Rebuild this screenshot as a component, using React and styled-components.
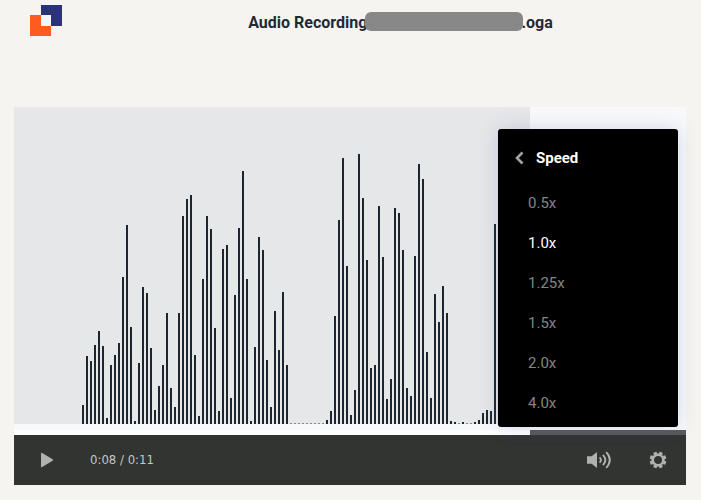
import React, { useState } from "react";
import styled, { createGlobalStyle } from "styled-components";

const GlobalStyle = createGlobalStyle`
  *, *::before, *::after { box-sizing: border-box; }
  body {
    margin: 0;
    background: #f5f4f0;
    color: #1f2a37;
    font-family: Roboto, "Liberation Sans", sans-serif;
  }
`;

const Page = styled.div`
  padding: 0 15px 15px 14px;
`;

const Header = styled.header`
  display: grid;
  grid-template-columns: 86px 1fr;
  height: 107px;
  margin-right: -15px;
`;

const HomeLink = styled.a`
  display: block;
  padding: 5px 0 0 16px;
  svg { display: block; }
`;

const Title = styled.h1`
  display: flex;
  justify-content: center;
  align-items: flex-start;
  height: 20px;
  margin: 12px 0 0;
  font-size: 16px;
  line-height: 22px;
  font-weight: 700;
  white-space: pre;
`;

const Redaction = styled.span`
  width: 158px;
  height: 19px;
  margin: 0 -2px 0 -2px;
  border-radius: 6px;
  background: #888888;
  z-index: 1;
`;

const Player = styled.main`
  position: relative;
`;

const Stage = styled.div`
  padding-bottom: 6px;
  background: #f8f9fb;
`;

const Played = styled.div`
  background: linear-gradient(to right, #e6e7e9 ${(p) => p.$percent}%, transparent 0);
  svg { display: block; width: 100%; height: auto; }
`;

const Progress = styled.div`
  height: 5px;
  background: linear-gradient(to right, #ffffff ${(p) => p.$percent}%, #585b5a 0);
`;

const Controls = styled.div`
  display: flex;
  align-items: center;
  height: 50px;
  padding: 0 19px 0 25px;
  background: #323432;
  color: #b0b1b0;
`;

const Button = styled.button`
  padding: 0;
  border: 0;
  background: none;
  color: inherit;
  font: inherit;
  cursor: pointer;
`;

const IconButton = styled(Button)`
  display: flex;
  align-items: center;
  justify-content: center;
  width: ${(p) => p.$width}px;
  height: 32px;
`;

const Time = styled.div`
  margin-left: 35px;
  font: 13px/20px "DejaVu Sans Condensed", "Noto Sans", sans-serif;
  color: #c6c7c6;
  white-space: pre;
`;

const Actions = styled.div`
  display: flex;
  gap: 38px;
  margin-left: auto;
`;

const Menu = styled.div`
  position: absolute;
  right: 8px;
  bottom: 58px;
  width: 180px;
  padding: 14px 0 4px;
  border-radius: 3px;
  background: #000000;
  box-shadow: 0 0 20px rgba(60, 80, 150, 0.2);
`;

const Back = styled(Button)`
  display: flex;
  align-items: center;
  gap: 12px;
  width: 100%;
  height: 30px;
  padding-left: 16px;
  color: #ffffff;
  font-size: 15px;
  font-weight: 700;
`;

const Speeds = styled.div`
  display: flex;
  flex-direction: column;
  padding-top: 10px;
`;

const Speed = styled(Button)`
  height: 40px;
  padding-left: 30px;
  color: ${(p) => (p.$active ? "#ffffff" : "#858585")};
  font-size: 15px;
  text-align: left;
`;

const BARS = [
  19, 68, 63, 79, 93, 78, 6, 59, 69, 81, 147, 199, 97, 3, 61, 137, 131, 76, 14, 38,
  59, 111, 36, 17, 111, 208, 225, 229, 69, 8, 145, 208, 195, 96, 13, 175, 179, 26,
  129, 196, 253, 145, 3, 77, 187, 174, 64, 17, 113, 74, 132, 59, 1, 1, 1, 1, 1, 1,
  1, 1, 1, 4, 13, 108, 204, 266, 158, 9, 34, 270, 226, 164, 56, 59, 218, 167, 25,
  45, 216, 211, 174, 36, 28, 168, 260, 245, 72, 26, 130, 102, 138, 111, 3, 2, 1, 2,
  1, 1, 2, 4, 11, 14, 13, 200,
];

const SPEEDS = ["0.5x", "1.0x", "1.25x", "1.5x", "2.0x", "4.0x"];
const POSITION = 76.8;

const Logo = () => (
  <svg width="32" height="31" viewBox="0 0 32 31" aria-hidden="true">
    <path d="M11 0h21v21H21V10H11z" fill="#2b3377" />
    <path d="M0 10h11v11h10v10H0z" fill="#ff5a1f" />
    <path d="M11 10h10v11H11z" fill="#f5f4f6" />
  </svg>
);

const Waveform = () => (
  <svg viewBox="0 0 672 317" role="img" aria-label="Waveform">
    {BARS.map((height, i) => (
      <rect
        key={i}
        x={68 + i * 4}
        y={317 - height}
        width="2"
        height={height}
        fill={height === 1 ? "#858b91" : "#1c2630"}
      />
    ))}
  </svg>
);

const PlayIcon = () => (
  <svg width="14" height="16" viewBox="0 0 14 16" fill="currentColor" aria-hidden="true">
    <path d="M1 1.5Q1 .2 2.2.9L12.6 7.3Q13.6 8 12.6 8.7L2.2 15.1Q1 15.8 1 14.5z" />
  </svg>
);

const VolumeIcon = () => (
  <svg width="24" height="20" viewBox="0 0 24 20" fill="none" stroke="currentColor" aria-hidden="true">
    <path d="M0 6.2h4.6L10 2v16l-5.4-4.2H0z" fill="currentColor" stroke="none" />
    <path d="M12.6 7.4q2.6 2.6 0 5.2M15.9 4.8q5 5.2 0 10.4M19.2 2.2q7.2 7.8 0 15.6" strokeWidth="1.9" />
  </svg>
);

const GearIcon = () => (
  <svg width="18" height="18" viewBox="0 0 18 18" fill="none" stroke="currentColor" aria-hidden="true">
    <circle cx="9" cy="9" r="5.2" strokeWidth="2.4" />
    {[0, 45, 90, 135, 180, 225, 270, 315].map((angle) => (
      <path
        key={angle}
        d="M7 3.2L7.4.6h3.2l.4 2.6z"
        fill="currentColor"
        stroke="none"
        transform={`rotate(${angle + 22.5} 9 9)`}
      />
    ))}
  </svg>
);

const BackIcon = () => (
  <svg width="10" height="14" viewBox="0 0 10 14" fill="none" stroke="#a3a3a3" strokeWidth="2.6" aria-hidden="true">
    <path d="M8.5 1.5L3 7l5.5 5.5" />
  </svg>
);

export default function App() {
  const [speed, setSpeed] = useState("1.0x");

  return (
    <>
      <GlobalStyle />
      <Page>
        <Header>
          <HomeLink href="#" aria-label="Home"><Logo /></HomeLink>
          <Title>
            <span>Audio Recording</span>
            <Redaction />
            <span>.oga</span>
          </Title>
        </Header>
        <Player>
          <Stage>
            <Played $percent={POSITION}><Waveform /></Played>
          </Stage>
          <Progress $percent={POSITION} role="progressbar" aria-label="Playback position" aria-valuenow={POSITION} />
          <Controls>
            <IconButton $width={16} aria-label="Play"><PlayIcon /></IconButton>
            <Time>0:08 / 0:11</Time>
            <Actions>
              <IconButton $width={24} aria-label="Volume"><VolumeIcon /></IconButton>
              <IconButton $width={18} aria-label="Settings"><GearIcon /></IconButton>
            </Actions>
          </Controls>
          <Menu>
            <Back><BackIcon />Speed</Back>
            <Speeds>
              {SPEEDS.map((value) => (
                <Speed
                  key={value}
                  $active={value === speed}
                  aria-pressed={value === speed}
                  onClick={() => setSpeed(value)}
                >
                  {value}
                </Speed>
              ))}
            </Speeds>
          </Menu>
        </Player>
      </Page>
    </>
  );
}
